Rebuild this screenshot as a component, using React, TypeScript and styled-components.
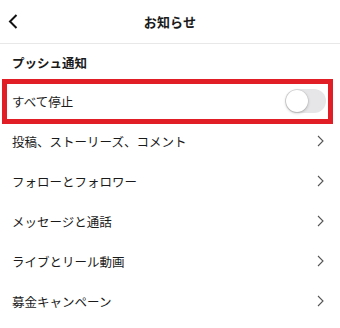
import styled, { createGlobalStyle } from "styled-components";

const Global = createGlobalStyle`
  html, body {
    margin: 0;
    padding: 0;
    background: #ffffff;
  }
  body {
    font-family: "Noto Sans CJK JP", "Noto Sans", sans-serif;
    color: #1a1a1a;
  }
`;

const Page = styled.div`
  width: 340px;
  height: 328px;
  overflow: hidden;
  background: #fff;
`;

const Header = styled.header`
  height: 43px;
  border-bottom: 1px solid #e8e8e8;
  display: grid;
  grid-template-columns: 40px 1fr 40px;
  align-items: center;
`;

const BackButton = styled.button`
  border: 0;
  background: none;
  padding: 0 0 0 8px;
  height: 43px;
  display: flex;
  align-items: center;
  cursor: pointer;
`;

const Title = styled.h1`
  margin: 0;
  font-size: 13px;
  font-weight: 700;
  text-align: center;
  letter-spacing: 0.2px;
`;

const SectionTitle = styled.h2`
  margin: 0;
  height: 37px;
  padding: 0 12px;
  display: flex;
  align-items: center;
  font-size: 12.5px;
  font-weight: 700;
`;

const Row = styled.div<{ $marked?: boolean }>`
  position: relative;
  height: 40px;
  padding: 0 16px 0 12px;
  display: flex;
  align-items: center;
  justify-content: space-between;
  font-size: 12.5px;

  ${(p) =>
    p.$marked &&
    `
    &::after {
      content: "";
      position: absolute;
      top: -2px;
      bottom: -3px;
      left: 2px;
      right: 7px;
      border: 5px solid #e11d26;
      pointer-events: none;
    }
  `}
`;

const Toggle = styled.span`
  position: relative;
  width: 41px;
  height: 24px;
  margin-right: -2px;
  border-radius: 12px;
  background: #e6e6e8;
  display: inline-block;

  &::before {
    content: "";
    position: absolute;
    left: 1px;
    top: 1px;
    width: 22px;
    height: 22px;
    border-radius: 50%;
    background: #fff;
    box-shadow: 0 1px 3px rgba(0, 0, 0, 0.25), 0 0 0 0.5px rgba(0, 0, 0, 0.08);
  }
`;

const BackIcon = () => (
  <svg width="10" height="15" viewBox="0 0 10 15">
    <path d="M8.5 1 L2 7.5 L8.5 14" fill="none" stroke="#111" strokeWidth="2" />
  </svg>
);

const Chevron = () => (
  <svg width="7" height="12" viewBox="0 0 7 12">
    <path d="M1 1 L6 6 L1 11" fill="none" stroke="#555" strokeWidth="1.1" />
  </svg>
);

const items = [
  "投稿、ストーリーズ、コメント",
  "フォローとフォロワー",
  "メッセージと通話",
  "ライブとリール動画",
  "募金キャンペーン",
];

export default function App() {
  return (
    <Page>
      <Global />
      <Header>
        <BackButton aria-label="戻る">
          <BackIcon />
        </BackButton>
        <Title>お知らせ</Title>
        <span />
      </Header>
      <SectionTitle>プッシュ通知</SectionTitle>
      <Row $marked>
        <span>すべて停止</span>
        <Toggle />
      </Row>
      {items.map((label) => (
        <Row key={label}>
          <span>{label}</span>
          <Chevron />
        </Row>
      ))}
    </Page>
  );
}
